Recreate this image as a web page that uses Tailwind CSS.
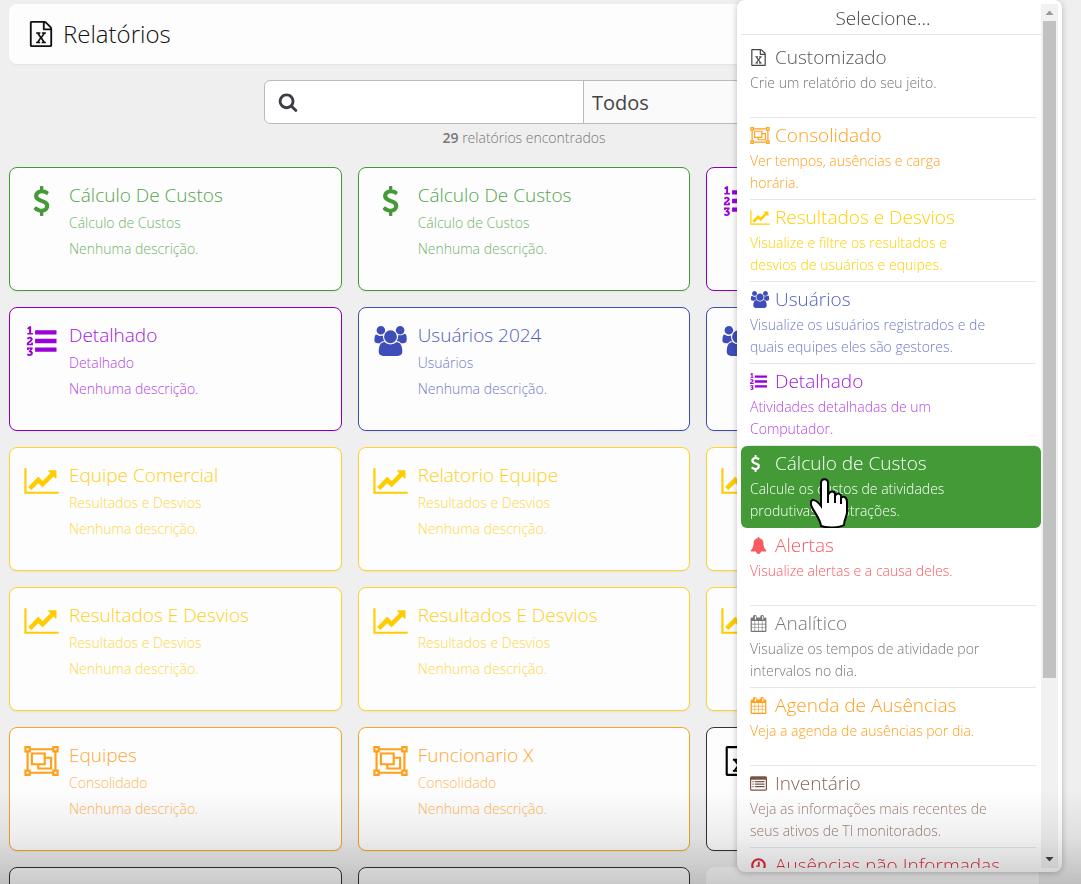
<!DOCTYPE html>
<html lang="pt-BR">
<head>
  <meta charset="UTF-8" />
  <meta name="viewport" content="width=device-width, initial-scale=1" />
  <title>Relatórios</title>
  <script src="https://cdn.jsdelivr.net/npm/@tailwindcss/browser@4"></script>
</head>
<body class="bg-[#efefef] h-screen overflow-hidden font-['Open_Sans',sans-serif] font-light">

  <!-- Icon sprite -->
  <svg class="hidden">
    <symbol id="file" viewBox="0 0 1792 1792"><path d="M1596 380q28 28 48 76t20 88v1152q0 40-28 68t-68 28h-1344q-40 0-68-28t-28-68v-1600q0-40 28-68t68-28h896q40 0 88 20t76 48zm-444-244v376h376q-10-29-22-41l-313-313q-12-12-41-22zm384 1528v-1024h-416q-40 0-68-28t-28-68v-416h-768v1536h1280zm-979-234v106h281v-106h-75l103-161q5-7 10-16.5t7.5-13.5 3.5-4h2q1 4 5 10 2 4 4.5 7.5t6 8 6.5 8.5l107 161h-76v106h291v-106h-68l-192-273 195-282h67v-107h-279v107h74l-103 159q-4 7-10 16.5t-9 13.5l-2 3h-2q-1-4-5-10-6-11-17-23l-106-159h76v-107h-290v107h68l189 272-194 283h-68z"/></symbol>
    <symbol id="dollar" viewBox="384 0 1024 1792"><path d="M1362 1185q0 153-99.5 263.5t-258.5 136.5v175q0 14-9 23t-23 9h-135q-13 0-22.5-9.5t-9.5-22.5v-175q-66-9-127.5-31t-101.5-44.5-74-48-46.5-37.5-17.5-18q-17-21-2-41l103-135q7-10 23-12 15-2 24 9l2 2q113 99 243 125 37 8 74 8 81 0 142.5-43t61.5-122q0-28-15-53t-33.5-42-58.5-37.5-66-32-80-32.5q-39-16-61.5-25t-61.5-26.5-62.5-31-56.5-35.5-53.5-42.5-43.5-49-35.5-58-21-66.5-8.5-78q0-138 98-242t255-134v-180q0-13 9.5-22.5t22.5-9.5h135q14 0 23 9t9 23v176q57 6 110.5 23t87 33.5 63.5 37.5 39 29 15 14q17 18 5 38l-81 146q-8 15-23 16-14 3-27-7-3-3-14.5-12t-39-26.5-58.5-32-74.5-26-85.5-11.5q-95 0-155 43t-60 111q0 26 8.5 48t29.5 41.5 39.5 33 56 31 60.5 27 70 27.5q53 20 81 31.5t76 35 75.5 42.5 62 50 53 63.5 31.5 76.5 13 94z"/></symbol>
    <symbol id="chart" viewBox="0 0 2048 1792"><path d="M2048 1536v128h-2048v-1536h128v1408h1920zm-128-1248v435q0 21-19.5 29.5t-35.5-7.5l-121-121-633 633q-10 10-23 10t-23-10l-233-233-416 416-192-192 585-585q10-10 23-10t23 10l233 233 464-464-121-121q-16-16-7.5-35.5t29.5-19.5h435q14 0 23 9t9 23z"/></symbol>
    <symbol id="users" viewBox="0 0 2048 1792"><path d="M657 896q-162 5-265 128h-134q-82 0-138-40.5t-56-118.5q0-353 124-353 6 0 43.5 21t97.5 42.5 119 21.5q67 0 133-23-5 37-5 66 0 159 93 298zm1071 637q0 120-73 189.5t-194 69.5h-874q-121 0-194-69.5t-73-189.5q0-53 3.5-103.5t14-109 26.5-108.5 43-97.5 62-81 85.5-53.5 111.5-20q10 0 43 21.5t73 48 107 48 135 21.5 135-21.5 107-48 73-48 43-21.5q61 0 111.5 20t85.5 53.5 62 81 43 97.5 26.5 108.5 14 109 3.5 103.5zm-1024-1277q0 106-75 181t-181 75-181-75-75-181 75-181 181-75 181 75 75 181zm704 384q0 159-112.5 271.5t-271.5 112.5-271.5-112.5-112.5-271.5 112.5-271.5 271.5-112.5 271.5 112.5 112.5 271.5zm576 225q0 78-56 118.5t-138 40.5h-134q-103-123-265-128 93-139 93-298 0-29-5-66 66 23 133 23 59 0 119-21.5t97.5-42.5 43.5-21q124 0 124 353zm-128-609q0 106-75 181t-181 75-181-75-75-181 75-181 181-75 181 75 75 181z"/></symbol>
    <symbol id="group" viewBox="0 0 2048 1792"><path fill-rule="evenodd" d="M2048 384h-128v1024h128v384h-384v-128h-1280v128h-384v-384h128v-1024h-128v-384h384v128h1280v-128h384v384zm-256-256v128h128v-128h-128zm-1664 0v128h128v-128h-128zm128 1536v-128h-128v128h128zm1408-128v-128h128v-1024h-128v-128h-1280v128h-128v1024h128v128h1280zm256 128v-128h-128v128h128zM1280 640h384v768h-896v-256h-384v-768h896zM512 512v512h640v-512zM1536 1280v-512h-256v384h-384v128z"/></symbol>
    <symbol id="list" viewBox="0 0 1792 1792"><path d="M381 1620q0 80-54.5 126t-135.5 46q-106 0-172-66l57-88q49 45 106 45 29 0 50.5-14.5t21.5-42.5q0-64-105-56l-26-56q8-10 32.5-43.5t42.5-54 37-38.5v-1q-16 0-48.5 1t-48.5 1v53h-106v-152h333v88l-95 115q51 12 81 49t30 88zm2-627v159h-362q-6-36-6-54 0-51 23.5-93t56.5-68 66-47.5 56.5-43.5 23.5-45q0-25-14.5-38.5t-39.5-13.5q-46 0-81 58l-85-59q24-51 71.5-79.5t105.5-28.5q73 0 123 41.5t50 112.5q0 50-34 91.5t-75 64.5-75.5 50.5-35.5 52.5h127v-60h105zM384 413v99h-335v-99h107q0-41 .5-122t.5-121v-12h-2q-8 17-50 54l-71-76 136-127h106v404h108zM512 256h1280v256h-1280zM512 768h1280v256h-1280zM512 1280h1280v256h-1280z"/></symbol>
    <symbol id="bell" viewBox="-64 0 1792 1792"><path d="M1664 1408q0 52-38 90t-90 38h-448q0 106-75 181t-181 75-181-75-75-181h-448q-52 0-90-38t-38-90q50-42 91-88t85-119.5 74.5-158.5 50-206 19.5-260q0-152 117-282.5t307-158.5q-8-19-8-39 0-40 28-68t68-28 68 28 28 68q0 20-8 39 190 28 307 158.5t117 282.5q0 139 19.5 260t50 206 74.5 158.5 85 119.5 91 88z"/></symbol>
    <symbol id="calendar" viewBox="0 0 1792 1792"><path fill-rule="evenodd" d="M192 1664h288v-288h-288v288zm352 0h320v-288h-320v288zm-352-352h288v-320h-288v320zm352 0h320v-320h-320v320zm-352-384h288v-288h-288v288zm736 736h320v-288h-320v288zm-384-736h320v-288h-320v288zm768 736h288v-288h-288v288zm-384-352h320v-320h-320v320zm384 0h288v-320h-288v320zm-384-384h320v-288h-320v288zm384 0h288v-288h-288v288zM544 128h64q32 0 32 32v288q0 32-32 32h-64q-32 0-32-32v-288q0-32 32-32zM1312 128h64q32 0 32 32v288q0 32-32 32h-64q-32 0-32-32v-288q0-32 32-32zM1728 384v1280q0 52-38 90t-90 38h-1408q-52 0-90-38t-38-90v-1280q0-52 38-90t90-38h128v-96q0-66 47-113t113-47h64q66 0 113 47t47 113v96h384v-96q0-66 47-113t113-47h64q66 0 113 47t47 113v96h128q52 0 90 38t38 90z"/></symbol>
    <symbol id="inventory" viewBox="0 0 1792 1792"><path fill-rule="evenodd" d="M160 128h1472q66 0 113 47t47 113v1216q0 66-47 113t-113 47h-1472q-66 0-113-47t-47-113v-1216q0-66 47-113t113-47zM160 512q-32 0-32 32v960q0 32 32 32h1472q32 0 32-32v-960q0-32-32-32zM256 640h128v128h-128zM512 640h1024v128h-1024zM256 896h128v128h-128zM512 896h1024v128h-1024zM256 1152h128v128h-128zM512 1152h1024v128h-1024z"/></symbol>
    <symbol id="clock" viewBox="0 0 1792 1792"><circle cx="896" cy="896" r="656" fill="none" stroke="currentColor" stroke-width="224"/><path d="M832 512h192v512h-384v-128h192z"/></symbol>
    <symbol id="search" viewBox="0 0 1792 1792"><path d="M1216 832q0-185-131.5-316.5t-316.5-131.5-316.5 131.5-131.5 316.5 131.5 316.5 316.5 131.5 316.5-131.5 131.5-316.5zm512 832q0 52-38 90t-90 38q-54 0-90-38l-343-342q-179 124-399 124-143 0-273.5-55.5t-225-150-150-225-55.5-273.5 55.5-273.5 150-225 225-150 273.5-55.5 273.5 55.5 225 150 150 225 55.5 273.5q0 220-124 399l343 343q37 37 37 90z"/></symbol>
  </svg>

  <main class="pt-1 pl-[9px] pr-[42px]">

    <header class="h-[60px] flex items-center gap-[9px] px-[19px] bg-[#fdfdfd] rounded-lg shadow-xs text-[#111]">
      <svg class="size-[26px] fill-current"><use href="#file" /></svg>
      <h1 class="text-2xl leading-8">Relatórios</h1>
    </header>

    <!-- Search -->
    <form class="mt-4 mx-auto max-w-[520px] h-11 flex bg-white border border-[#bbb] rounded-md overflow-hidden">
      <label for="search" class="w-[46px] flex items-center justify-center text-[#3d3d45]">
        <svg class="size-5 fill-current" aria-label="Buscar"><use href="#search" /></svg>
      </label>
      <input type="text" id="search" class="min-w-0 flex-1 outline-none" />
      <select aria-label="Tipo" class="w-[200px] px-2 pt-[2px] appearance-none bg-[#fafafa] border-l border-[#bbb] text-[20px] text-[#444] font-normal">
        <option>Todos</option>
      </select>
    </form>
    <p class="mt-1 text-center text-sm leading-5 text-[#777]"><b class="font-semibold">29</b> relatórios encontrados</p>

    <section id="reports" class="mt-[19px] grid grid-cols-3 gap-4"></section>
  </main>

  <!-- Report type menu -->
  <aside class="fixed top-0 bottom-3 right-[19px] w-[325px] p-1 flex bg-white rounded-lg shadow-[0_1px_6px_rgba(0,0,0,0.25)]">
    <div class="flex-1 overflow-hidden">
      <h2 class="h-[31px] mb-[5px] pr-4 border-b border-[#e4e4e4] text-center text-[19px] leading-7 text-[#444]">Selecione...</h2>
      <ul id="types"></ul>
    </div>
    <div class="w-[17px] flex flex-col items-center bg-[#f1f1f1]">
      <svg class="w-[17px] h-[17px]" viewBox="0 0 17 17"><path d="M4.500 11l4-4.500 4 4.500z" fill="#999"/></svg>
      <div class="w-[13px] h-[76%] bg-[#c1c1c1]"></div>
      <svg class="w-[17px] h-[17px] mt-auto" viewBox="0 0 17 17"><path d="M4.500 6l4 4.500 4-4.500z" fill="#444"/></svg>
    </div>
  </aside>

  <!-- Bottom shade -->
  <div class="fixed inset-x-0 bottom-0 h-24 pointer-events-none bg-linear-to-t from-black/20 via-black/6 to-transparent"></div>

  <script>
    const styles = {
      green: 'border-[#439a37] text-[#439a37]',
      purple: 'border-[#8a00b8] text-[#9a00d8]',
      blue: 'border-[#3f4db0] text-[#3f4db8]',
      yellow: 'border-[#ffd42a] text-[#ffcc00]',
      orange: 'border-[#f5a623] text-[#ff9f1a]',
      black: 'border-[#333] text-black',
      white: 'border-[#fdfdfd] text-black'
    };

    const reports = [
      ['green', 'dollar', 'Cálculo De Custos', 'Cálculo de Custos'],
      ['green', 'dollar', 'Cálculo De Custos', 'Cálculo de Custos'],
      ['purple', 'list'],
      ['purple', 'list', 'Detalhado', 'Detalhado'],
      ['blue', 'users', 'Usuários 2024', 'Usuários'],
      ['blue', 'users'],
      ['yellow', 'chart', 'Equipe Comercial', 'Resultados e Desvios'],
      ['yellow', 'chart', 'Relatorio Equipe', 'Resultados e Desvios'],
      ['yellow', 'chart'],
      ['yellow', 'chart', 'Resultados E Desvios', 'Resultados e Desvios'],
      ['yellow', 'chart', 'Resultados E Desvios', 'Resultados e Desvios'],
      ['yellow', 'chart'],
      ['orange', 'group', 'Equipes', 'Consolidado'],
      ['orange', 'group', 'Funcionario X', 'Consolidado'],
      ['black', 'file'],
      ['black'],
      ['black'],
      ['white']
    ];

    document.getElementById('reports').innerHTML = reports.map(([color, icon, title, type]) => `
      <a href="#" class="h-[124px] flex gap-[10px] pl-[14px] pt-[13px] bg-[#fdfdfd] border rounded-lg shadow-xs ${styles[color]}">
        ${icon ? `<svg class="w-[35px] h-[30px] mt-[5px] fill-current"><use href="#${icon}" /></svg>` : ''}
        ${title ? `<div>
          <h3 class="mb-px text-[19px] leading-7 opacity-90">${title}</h3>
          <p class="text-sm leading-[26px] opacity-75">${type}</p>
          <p class="text-sm leading-[26px] opacity-75">Nenhuma descrição.</p>
        </div>` : ''}
      </a>`).join('');

    const types = [
      ['text-[#444]', 'file', 'Customizado', 'Crie um relatório do seu jeito.'],
      ['text-[#ffa01e]', 'group', 'Consolidado', 'Ver tempos, ausências e carga<br>horária.'],
      ['text-[#ffd000]', 'chart', 'Resultados e Desvios', 'Visualize e filtre os resultados e<br>desvios de usuários e equipes.'],
      ['text-[#3f4db8]', 'users', 'Usuários', 'Visualize os usuários registrados e de<br>quais equipes eles são gestores.'],
      ['text-[#9a00d8]', 'list', 'Detalhado', 'Atividades detalhadas de um<br>Computador.'],
      ['text-white', 'dollar', 'Cálculo de Custos', 'Calcule os custos de atividades<br>produtivas e distrações.'],
      ['text-[#fa5a62]', 'bell', 'Alertas', 'Visualize alertas e a causa deles.'],
      ['text-[#777]', 'calendar', 'Analítico', 'Visualize os tempos de atividade por<br>intervalos no dia.'],
      ['text-[#ff9f1a]', 'calendar', 'Agenda de Ausências', 'Veja a agenda de ausências por dia.'],
      ['text-[#795548]', 'inventory', 'Inventário', 'Veja as informações mais recentes de<br>seus ativos de TI monitorados.'],
      ['text-[#dc2f40]', 'clock', 'Ausências não Informadas', '']
    ];

    // Icons drawn wider or narrower than the usual square
    const widths = { group: 'w-5', chart: 'w-5', users: 'w-5', dollar: 'w-[11px]' };

    // Dark colours get a softer description text
    const soft = ['file', 'users', 'list', 'inventory'];

    // Hand pointer over the active entry
    const pointer = `<svg class="absolute left-[69px] top-8 w-[38px] h-[50px]" viewBox="0 0 38 50">
      <path d="M11 48C10 39 1 31 1 26C0 20 6 21 11 28V5C11 0 18 0 18 5V17C21 11 26 14 25 18C28 13 32 17 31 20C34 17 37 20 37 24V34C37 39 34 41 34 47C30 50 16 50 11 48Z" fill="white" stroke="black" stroke-width="2"/>
      <path d="M18 15V25M25 17V25M31 19V26" stroke="black" stroke-width="2"/></svg>`;

    document.getElementById('types').innerHTML = types.map(([color, icon, title, text]) => {
      const active = icon === 'dollar';
      return `<li class="relative ${active ? 'bg-[#439a37] rounded-md' : ''}">
        <button type="button" class="w-full pl-[9px] pr-[5px] block text-left ${color}">
          <span class="min-h-[78px] pt-1 pb-[5px] block border-b ${active ? 'border-transparent' : 'border-[#e6e6e6]'}">
            <span class="h-[26px] mb-[2px] flex items-center gap-[5px]">
              <span class="w-5 flex"><svg class="${widths[icon] || 'w-[17px]'} h-[17px] fill-current"><use href="#${icon}" /></svg></span>
              <span class="text-[19px] leading-[26px] ${soft.includes(icon) ? 'opacity-90' : ''}">${title}</span>
            </span>
            <span class="block text-sm leading-[22px] ${soft.includes(icon) ? 'opacity-75' : ''}">${text}</span>
          </span>
        </button>
        ${active ? pointer : ''}
      </li>`;
    }).join('');
  </script>

</body>
</html>
